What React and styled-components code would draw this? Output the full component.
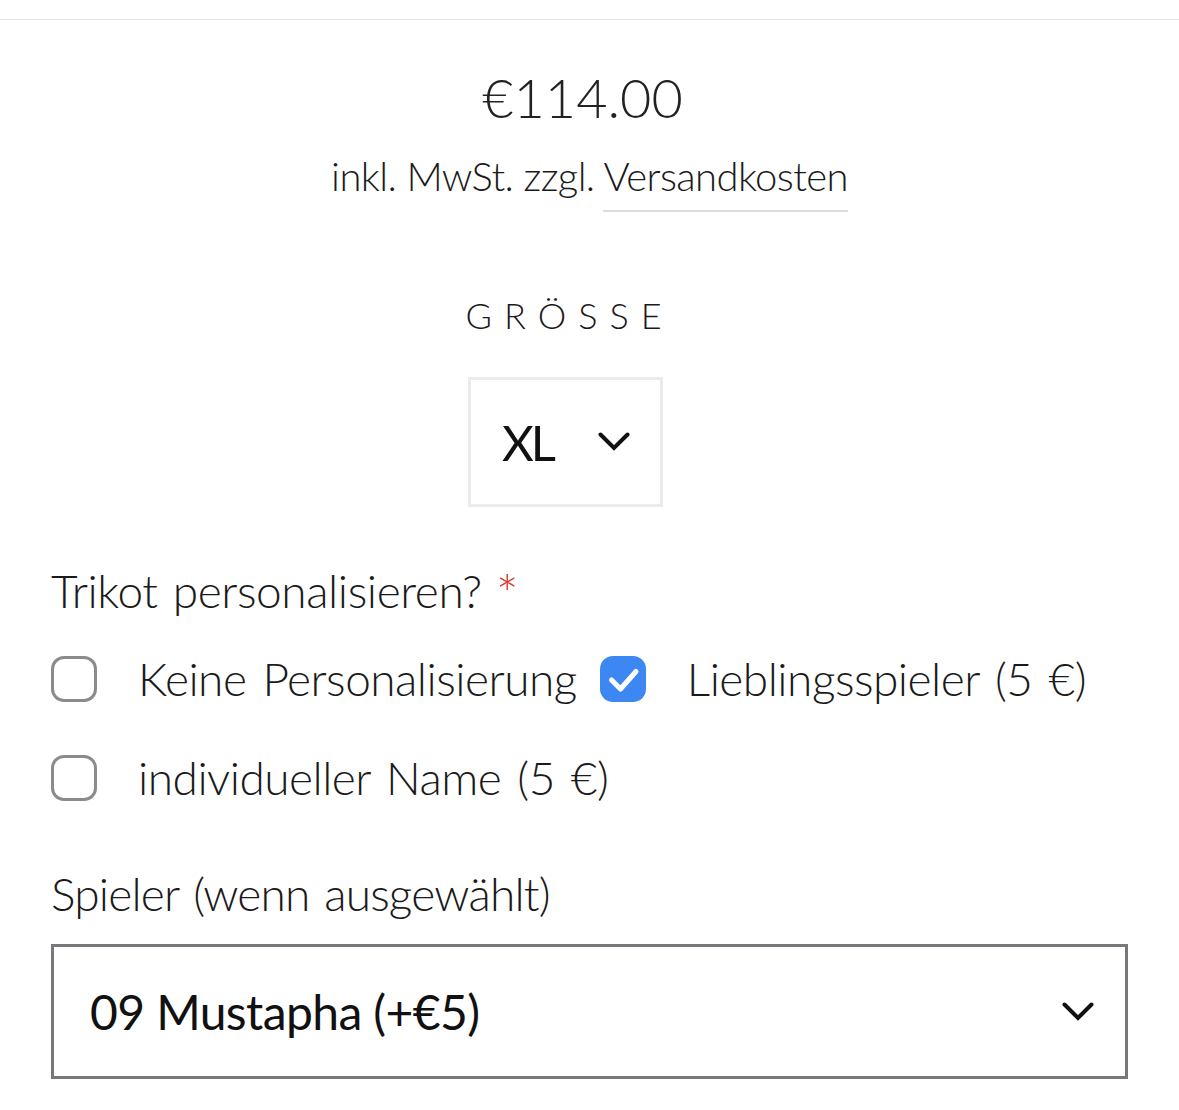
import React from "react";
import styled, { createGlobalStyle } from "styled-components";

const GlobalStyle = createGlobalStyle`
  html, body { margin: 0; padding: 0; background: #fff; }
  body {
    font-family: "Lato", "Inter", "Liberation Sans", sans-serif;
    color: #1a1a1a;
    -webkit-font-smoothing: antialiased;
  }
`;

const Page = styled.div`
  margin-top: 19px;
  border-top: 1px solid #e6e6e6;
  padding: 0 51px;
`;

const PriceBlock = styled.div`
  display: flex;
  flex-direction: column;
  align-items: center;
`;

const Price = styled.div`
  margin-top: 51px;
  padding-right: 14px;
  font-size: 54px;
  font-weight: 300;
  line-height: 1;
  color: #222;
`;

const TaxNote = styled.div`
  margin-top: 31px;
  font-size: 40px;
  font-weight: 300;
  line-height: 1;
  letter-spacing: -0.6px;
  color: #1a1a1a;
`;

const ShippingLink = styled.span`
  padding-bottom: 10px;
  border-bottom: 2px solid #dcdcdc;
`;

const SizeBlock = styled.div`
  display: flex;
  flex-direction: column;
  align-items: center;
  padding-right: 48px;
  margin-top: 101px;
`;

const SizeLabel = styled.div`
  font-size: 36px;
  font-weight: 300;
  line-height: 1;
  letter-spacing: 12px;
  color: #1a1a1a;
  padding-left: 8px;
`;

const SizeSelect = styled.div`
  margin-top: 44px;
  box-sizing: border-box;
  width: 195px;
  height: 130px;
  border: 3px solid #ebebe9;
  display: flex;
  align-items: center;
  justify-content: space-between;
  padding: 0 30px 0 31px;
`;

const SelectValue = styled.span`
  font-size: ${(p) => p.$size || 49}px;
  font-weight: 400;
  line-height: 1;
  letter-spacing: ${(p) => p.$spacing || 0}px;
  color: #111;
`;

const FieldLabel = styled.div`
  margin-top: ${(p) => p.$top}px;
  font-size: 46px;
  font-weight: 300;
  line-height: 1;
  letter-spacing: ${(p) => p.$spacing ?? -0.4}px;
  word-spacing: 3px;
  color: #1a1a1a;
`;

const Required = styled.span`
  margin-left: 14px;
  font-size: 54px;
  line-height: 0;
  vertical-align: -6px;
  color: #d9372c;
`;

const Options = styled.div`
  margin-top: 42px;
  display: flex;
  flex-wrap: wrap;
  column-gap: 23px;
  row-gap: 53px;
`;

const Option = styled.label`
  display: flex;
  align-items: center;
  gap: 41px;
  height: 46px;
  font-size: 46px;
  font-weight: 300;
  line-height: 1;
  letter-spacing: -0.5px;
  word-spacing: 4px;
  color: #1a1a1a;
`;

const Box = styled.span`
  box-sizing: border-box;
  width: 46px;
  height: 46px;
  flex: 0 0 46px;
  border-radius: 13px;
  border: ${(p) => (p.$checked ? "none" : "3.5px solid #8b8b8b")};
  background: ${(p) => (p.$checked ? "#3d87f2" : "#fff")};
  display: flex;
  align-items: center;
  justify-content: center;
`;

const PlayerSelect = styled.div`
  margin-top: 27px;
  box-sizing: border-box;
  height: 135px;
  border: 3px solid #77787b;
  display: flex;
  align-items: center;
  justify-content: space-between;
  padding: 0 31px 0 36px;
`;

const Chevron = () => (
  <svg width="32" height="20" viewBox="0 0 32 20" fill="none">
    <path
      d="M2.5 2.5 L16 16 L29.5 2.5"
      stroke="#111"
      strokeWidth="4"
      strokeLinecap="round"
      strokeLinejoin="miter"
    />
  </svg>
);

const Check = () => (
  <svg width="46" height="46" viewBox="0 0 46 46" fill="none">
    <path
      d="M11.5 24 L20.5 33 L36 15.5"
      stroke="#fff"
      strokeWidth="5"
      strokeLinecap="round"
      strokeLinejoin="round"
    />
  </svg>
);

const Checkbox = ({ checked, children }) => (
  <Option>
    <Box $checked={checked}>{checked && <Check />}</Box>
    <span>{children}</span>
  </Option>
);

export default function App() {
  return (
    <>
      <GlobalStyle />
      <Page>
        <PriceBlock>
          <Price>€114.00</Price>
          <TaxNote>
            inkl. MwSt. zzgl. <ShippingLink>Versandkosten</ShippingLink>
          </TaxNote>
        </PriceBlock>

        <SizeBlock>
          <SizeLabel>GRÖSSE</SizeLabel>
          <SizeSelect>
            <SelectValue $spacing={-3}>XL</SelectValue>
            <Chevron />
          </SizeSelect>
        </SizeBlock>

        <FieldLabel $top={61}>
          Trikot personalisieren?<Required>*</Required>
        </FieldLabel>
        <Options>
          <Checkbox>Keine Personalisierung</Checkbox>
          <Checkbox checked>Lieblingsspieler (5 €)</Checkbox>
          <Checkbox>individueller Name (5 €)</Checkbox>
        </Options>

        <FieldLabel $top={70} $spacing={-0.8}>
          Spieler (wenn ausgewählt)
        </FieldLabel>
        <PlayerSelect>
          <SelectValue $size={48} $spacing={-0.6}>
            09 Mustapha (+€5)
          </SelectValue>
          <Chevron />
        </PlayerSelect>
      </Page>
    </>
  );
}
